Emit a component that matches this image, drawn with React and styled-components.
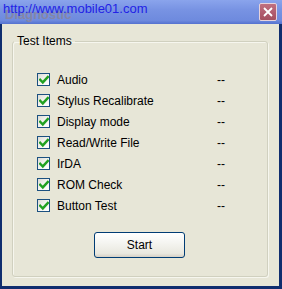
import React from "react";
import styled, { createGlobalStyle } from "styled-components";

const Global = createGlobalStyle`
  html, body { margin: 0; padding: 0; background: #fff; }
  * { box-sizing: border-box; }
`;

const Window = styled.div`
  position: relative;
  width: 282px;
  height: 289px;
  display: flex;
  flex-direction: column;
  background: #0f2d6e;
  padding: 0 3px 3px 2px;
  font-family: "Liberation Sans", Arial, sans-serif;
  overflow: hidden;
`;

const TitleBar = styled.div`
  position: relative;
  height: 25px;
  margin: 0 -3px 0 -2px;
  padding: 0 5px 0 3px;
  display: flex;
  align-items: flex-start;
  justify-content: space-between;
  background: linear-gradient(180deg, #8aa4ec 0%, #7893e3 40%, #6e8ade 85%, #5472cf 100%);
`;

const GhostTitle = styled.span`
  position: absolute;
  left: 5px;
  top: 7px;
  font-size: 13px;
  font-weight: bold;
  color: #8586a6;
  white-space: nowrap;
`;

const Url = styled.span`
  position: relative;
  margin-top: 1px;
  font-size: 13px;
  line-height: 15px;
  color: #2222e6;
  white-space: nowrap;
`;

const CloseButton = styled.div`
  margin-top: 3px;
  width: 18px;
  height: 18px;
  border: 1px solid #e7d3dc;
  border-radius: 2px;
  background: linear-gradient(180deg, #c07080 0%, #b05a6c 60%, #a4505f 100%);
  display: flex;
  align-items: center;
  justify-content: center;
`;

const Body = styled.div`
  flex: 1;
  background: #e7e6d7;
  padding: 10px 11px 9px 10px;
  display: flex;
  flex-direction: column;
`;

const GroupBox = styled.fieldset`
  flex: 1;
  margin: 0;
  padding: 21px 0 18px 0;
  border: 1px solid #d0d0bf;
  border-radius: 3px;
  box-shadow: 1px 1px 0 #f6f6ee, inset 1px 1px 0 #f6f6ee;
  display: flex;
  flex-direction: column;
`;

const Legend = styled.legend`
  margin-left: 1px;
  padding: 0 3px;
  font-size: 12px;
  line-height: 14px;
  color: #000;
`;

const List = styled.div`
  display: flex;
  flex-direction: column;
  padding-left: 24px;
`;

const Row = styled.div`
  height: 21px;
  display: flex;
  align-items: center;
  font-size: 12px;
  color: #000;
`;

const Box = styled.span`
  width: 13px;
  height: 13px;
  flex: none;
  border: 1px solid #1c5180;
  background: linear-gradient(135deg, #dcdcd5 0%, #f4f4f0 50%, #ffffff 100%);
  display: flex;
  align-items: center;
  justify-content: center;
`;

const Label = styled.span`
  margin-left: 7px;
  width: 160px;
  white-space: nowrap;
`;

const Result = styled.span`
  letter-spacing: 0px;
`;

const ButtonRow = styled.div`
  margin-top: 16px;
  display: flex;
  justify-content: center;
  padding-right: 1px;
`;

const Button = styled.button`
  width: 91px;
  height: 26px;
  border: 1px solid #003c74;
  border-radius: 3px;
  background: linear-gradient(180deg, #ffffff 0%, #f5f5f1 40%, #e9e8df 85%, #d6d0c5 100%);
  font-family: "Liberation Sans", Arial, sans-serif;
  font-size: 12px;
  color: #000;
  padding: 0;
`;

const items = [
  "Audio",
  "Stylus Recalibrate",
  "Display mode",
  "Read/Write File",
  "IrDA",
  "ROM Check",
  "Button Test",
];

const Check = () => (
  <svg width="10" height="10" viewBox="0 0 10 10">
    <path d="M1.2 4.8 L3.8 7.4 L8.8 2" fill="none" stroke="#21a121" strokeWidth="2.4" strokeLinecap="square" />
  </svg>
);

export default function App() {
  return (
    <>
      <Global />
      <Window>
        <TitleBar>
          <GhostTitle>Diagnostic</GhostTitle>
          <Url>http://www.mobile01.com</Url>
          <CloseButton>
            <svg width="10" height="10" viewBox="0 0 10 10">
              <path d="M1 1 L9 9 M9 1 L1 9" stroke="#fff" strokeWidth="1.8" />
            </svg>
          </CloseButton>
        </TitleBar>
        <Body>
          <GroupBox>
            <Legend>Test Items</Legend>
            <List>
              {items.map((t) => (
                <Row key={t}>
                  <Box><Check /></Box>
                  <Label>{t}</Label>
                  <Result>--</Result>
                </Row>
              ))}
            </List>
            <ButtonRow>
              <Button>Start</Button>
            </ButtonRow>
          </GroupBox>
        </Body>
      </Window>
    </>
  );
}
